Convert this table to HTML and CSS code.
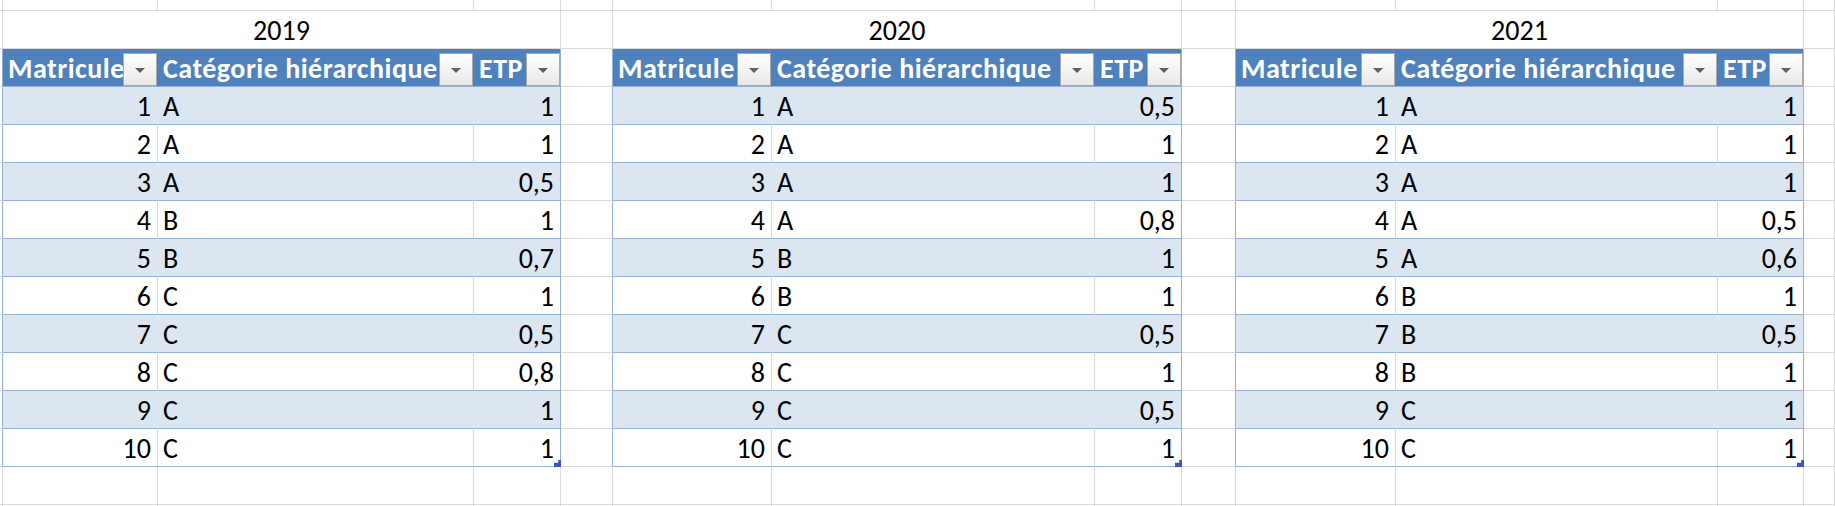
FILE: index.html
```html
<!DOCTYPE html>
<html lang="fr">
<head>
<meta charset="utf-8">
<title>Tableaux ETP</title>
<link rel="stylesheet" href="styles.css">
</head>
<body>
<div class="sheet">
  <!-- partial top row -->
  <div class="c"></div><div class="c"></div><div class="c"></div><div class="c"></div><div class="c"></div><div class="c"></div><div class="c"></div><div class="c"></div><div class="c"></div><div class="c"></div><div class="c"></div><div class="c"></div><div class="c"></div>

  <!-- titles -->
  <div class="c"></div><div class="c t">2019</div><div class="c"></div><div class="c t">2020</div><div class="c"></div><div class="c t">2021</div><div class="c"></div>

  <!-- headers -->
  <div class="c e"></div>
  <div class="c th"><span class="lbl">Matricule</span><i class="dd"></i></div><div class="c th"><span class="lbl">Catégorie hiérarchique</span><i class="dd"></i></div><div class="c th z"><span class="lbl">ETP</span><i class="dd"></i></div>
  <div class="c e"></div>
  <div class="c th"><span class="lbl">Matricule</span><i class="dd"></i></div><div class="c th"><span class="lbl">Catégorie hiérarchique</span><i class="dd"></i></div><div class="c th z"><span class="lbl">ETP</span><i class="dd"></i></div>
  <div class="c e"></div>
  <div class="c th"><span class="lbl">Matricule</span><i class="dd"></i></div><div class="c th"><span class="lbl">Catégorie hiérarchique</span><i class="dd"></i></div><div class="c th z"><span class="lbl">ETP</span><i class="dd"></i></div>
  <div class="c"></div>

  <!-- row 1 -->
  <div class="c e"></div>
  <div class="c d b r">1</div><div class="c d b l">A</div><div class="c d b r z">1</div>
  <div class="c e"></div>
  <div class="c d b r">1</div><div class="c d b l">A</div><div class="c d b r z">0,5</div>
  <div class="c e"></div>
  <div class="c d b r">1</div><div class="c d b l">A</div><div class="c d b r z">1</div>
  <div class="c"></div>

  <!-- row 2 -->
  <div class="c e"></div>
  <div class="c d r">2</div><div class="c d l">A</div><div class="c d r z">1</div>
  <div class="c e"></div>
  <div class="c d r">2</div><div class="c d l">A</div><div class="c d r z">1</div>
  <div class="c e"></div>
  <div class="c d r">2</div><div class="c d l">A</div><div class="c d r z">1</div>
  <div class="c"></div>

  <!-- row 3 -->
  <div class="c e"></div>
  <div class="c d b r">3</div><div class="c d b l">A</div><div class="c d b r z">0,5</div>
  <div class="c e"></div>
  <div class="c d b r">3</div><div class="c d b l">A</div><div class="c d b r z">1</div>
  <div class="c e"></div>
  <div class="c d b r">3</div><div class="c d b l">A</div><div class="c d b r z">1</div>
  <div class="c"></div>

  <!-- row 4 -->
  <div class="c e"></div>
  <div class="c d r">4</div><div class="c d l">B</div><div class="c d r z">1</div>
  <div class="c e"></div>
  <div class="c d r">4</div><div class="c d l">A</div><div class="c d r z">0,8</div>
  <div class="c e"></div>
  <div class="c d r">4</div><div class="c d l">A</div><div class="c d r z">0,5</div>
  <div class="c"></div>

  <!-- row 5 -->
  <div class="c e"></div>
  <div class="c d b r">5</div><div class="c d b l">B</div><div class="c d b r z">0,7</div>
  <div class="c e"></div>
  <div class="c d b r">5</div><div class="c d b l">B</div><div class="c d b r z">1</div>
  <div class="c e"></div>
  <div class="c d b r">5</div><div class="c d b l">A</div><div class="c d b r z">0,6</div>
  <div class="c"></div>

  <!-- row 6 -->
  <div class="c e"></div>
  <div class="c d r">6</div><div class="c d l">C</div><div class="c d r z">1</div>
  <div class="c e"></div>
  <div class="c d r">6</div><div class="c d l">B</div><div class="c d r z">1</div>
  <div class="c e"></div>
  <div class="c d r">6</div><div class="c d l">B</div><div class="c d r z">1</div>
  <div class="c"></div>

  <!-- row 7 -->
  <div class="c e"></div>
  <div class="c d b r">7</div><div class="c d b l">C</div><div class="c d b r z">0,5</div>
  <div class="c e"></div>
  <div class="c d b r">7</div><div class="c d b l">C</div><div class="c d b r z">0,5</div>
  <div class="c e"></div>
  <div class="c d b r">7</div><div class="c d b l">B</div><div class="c d b r z">0,5</div>
  <div class="c"></div>

  <!-- row 8 -->
  <div class="c e"></div>
  <div class="c d r">8</div><div class="c d l">C</div><div class="c d r z">0,8</div>
  <div class="c e"></div>
  <div class="c d r">8</div><div class="c d l">C</div><div class="c d r z">1</div>
  <div class="c e"></div>
  <div class="c d r">8</div><div class="c d l">B</div><div class="c d r z">1</div>
  <div class="c"></div>

  <!-- row 9 -->
  <div class="c e"></div>
  <div class="c d b r">9</div><div class="c d b l">C</div><div class="c d b r z">1</div>
  <div class="c e"></div>
  <div class="c d b r">9</div><div class="c d b l">C</div><div class="c d b r z">0,5</div>
  <div class="c e"></div>
  <div class="c d b r">9</div><div class="c d b l">C</div><div class="c d b r z">1</div>
  <div class="c"></div>

  <!-- row 10 -->
  <div class="c e"></div>
  <div class="c d r">10</div><div class="c d l">C</div><div class="c d r z h">1</div>
  <div class="c e"></div>
  <div class="c d r">10</div><div class="c d l">C</div><div class="c d r z h">1</div>
  <div class="c e"></div>
  <div class="c d r">10</div><div class="c d l">C</div><div class="c d r z h">1</div>
  <div class="c"></div>

  <!-- empty row -->
  <div class="c"></div><div class="c"></div><div class="c"></div><div class="c"></div><div class="c"></div><div class="c"></div><div class="c"></div><div class="c"></div><div class="c"></div><div class="c"></div><div class="c"></div><div class="c"></div><div class="c"></div>

  <!-- partial bottom row -->
  <div class="c"></div><div class="c"></div><div class="c"></div><div class="c"></div><div class="c"></div><div class="c"></div><div class="c"></div><div class="c"></div><div class="c"></div><div class="c"></div><div class="c"></div><div class="c"></div><div class="c"></div>
</div>
</body>
</html>
```

FILE: styles.css
```css
html, body {
  margin: 0;
  padding: 0;
}

body {
  width: 1835px;
  height: 506px;
  overflow: hidden;
  background: #ffffff;
  color: #000000;
  font-family: Carlito, "Liberation Sans", sans-serif;
  font-size: 28px;
}

.sheet {
  --grid: #dadada;
  --tb: #95b3d7;
  --band: #dce6f1;
  --head: #4f81bd;
  display: grid;
  grid-template-columns: 3px 155px 316px 87px 52px 159px 323px 87px 54px 160px 322px 86px 1fr;
  grid-template-rows: 11px repeat(13, 38px) 1fr;
  height: 506px;
}

.c {
  box-sizing: border-box;
  min-width: 0;
  border-right: 1px solid var(--grid);
  border-bottom: 1px solid var(--grid);
  display: flex;
  align-items: flex-end;
  line-height: 28px;
  padding-bottom: 3px;
  white-space: nowrap;
  overflow: hidden;
}

.t {
  grid-column: span 3;
  justify-content: center;
}

.e {
  border-right-color: var(--tb);
}

.th {
  background: var(--head);
  color: #ffffff;
  font-weight: bold;
  letter-spacing: 0.5px;
  border-right-color: var(--head);
  border-bottom-color: var(--tb);
  padding-left: 5px;
  padding-bottom: 0;
  justify-content: space-between;
}

.lbl {
  flex: 1 1 auto;
  min-width: 0;
  padding-bottom: 3px;
}

.dd {
  flex: 0 0 auto;
  box-sizing: border-box;
  width: 34px;
  height: 33px;
  border: 1px solid #a9a9a9;
  background: linear-gradient(#ffffff, #e9e9e9);
  display: flex;
  align-items: center;
  justify-content: center;
}

.dd::before {
  content: "";
  width: 0;
  height: 0;
  border-left: 5px solid transparent;
  border-right: 5px solid transparent;
  border-top: 5px solid #5f5f5f;
  margin-top: 2px;
}

.d {
  border-bottom-color: var(--tb);
}

.b {
  background: var(--band);
  border-right-color: var(--band);
}

.r {
  justify-content: flex-end;
  padding-right: 6px;
}

.l {
  padding-left: 5px;
}

.z {
  border-right-color: var(--tb);
}

.h {
  position: relative;
  overflow: visible;
}

.h::after {
  content: "";
  position: absolute;
  right: -1px;
  bottom: -1px;
  width: 7px;
  height: 7px;
  background: #3f56b5;
  clip-path: polygon(100% 0, 100% 100%, 0 100%, 0 40%, 60% 40%, 60% 0);
}
```
